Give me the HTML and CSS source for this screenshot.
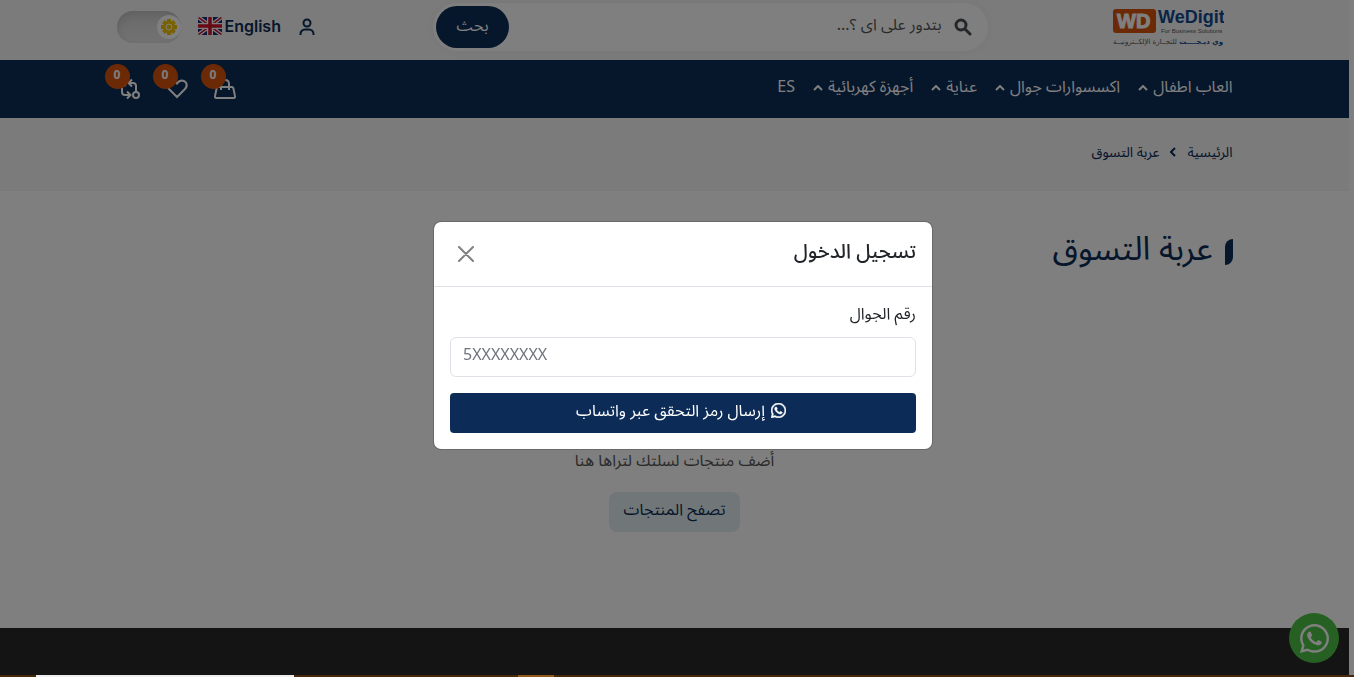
FILE: index.html
```html
<!DOCTYPE html>
<html lang="ar" dir="rtl">
<head>
  <meta charset="UTF-8">
  <meta name="viewport" content="width=device-width, initial-scale=1.0">
  <title>عربة التسوق</title>
  <link rel="stylesheet" href="styles.css">
</head>
<body>
  <div class="page">
    <header class="header">
      <div class="container header-row">
        <a href="#" class="logo" aria-label="WeDigit">
          <svg width="112" height="40" viewBox="0 0 112 40">
            <rect x="1" y="2" width="43" height="24" rx="3" fill="#d9530b"/>
            <text x="5" y="21" class="logo-mark" fill="#fff" stroke="#fff">WD</text>
            <text x="46" y="16" class="logo-name" fill="#12498f">WeDigit</text>
            <text x="49" y="26" class="logo-sub" fill="#555">For Business Solutions</text>
            <text x="111" y="37" class="logo-ar" direction="rtl"><tspan fill="#12498f" font-weight="bold">وي ديـجــــت</tspan><tspan fill="#555"> للتجــارة الإلكــترونيــة</tspan></text>
          </svg>
        </a>

        <form class="search">
          <svg class="search-icon" width="18" height="18" viewBox="0 0 18 18" fill="none" stroke="#495057" stroke-width="3">
            <circle cx="7" cy="7" r="5"/>
            <path d="M11 11l5 5" stroke-linecap="round"/>
          </svg>
          <input type="search" class="search-input" aria-label="بحث" placeholder="بتدور على اى ؟...">
          <button type="submit" class="search-btn">بحث</button>
        </form>

        <div class="actions">
          <a href="#" class="user" aria-label="حسابي">
            <svg width="16" height="18" viewBox="0 0 16 18" fill="none" stroke="#0c2c57" stroke-width="2">
              <circle cx="8" cy="5" r="3.5"/>
              <path d="M1.500 17v-1a4.500 4.500 0 0 1 4.500-4.500h4a4.500 4.500 0 0 1 4.500 4.500V17"/>
            </svg>
          </a>
          <a href="#" class="lang" dir="ltr">
            <svg width="24" height="18" viewBox="0 0 24 18">
              <clipPath id="flag"><rect width="24" height="18" rx="2"/></clipPath>
              <g clip-path="url(#flag)">
                <rect width="24" height="18" fill="#1b2a7b"/>
                <path d="M0 0l24 18M24 0L0 18" stroke="#fff" stroke-width="4"/>
                <path d="M0 0l24 18M24 0L0 18" stroke="#d0142c" stroke-width="1.500"/>
                <path d="M12 0v18M0 9h24" stroke="#fff" stroke-width="6"/>
                <path d="M12 0v18M0 9h24" stroke="#d0142c" stroke-width="3.500"/>
              </g>
            </svg>
            English
          </a>
          <label class="theme">
            <input type="checkbox" class="theme-input" aria-label="الوضع الليلي">
            <span class="theme-knob">
              <svg width="16" height="16" viewBox="0 0 16 16">
                <path d="M8 0v16M0 8h16M2.500 2.500l11 11M13.500 2.500l-11 11" stroke="#f2c200" stroke-width="4"/>
                <circle cx="8" cy="8" r="6" fill="#f2c200"/>
                <circle cx="8" cy="8" r="3" fill="#f2c200" stroke="#fff"/>
              </svg>
            </span>
          </label>
        </div>
      </div>
    </header>

    <nav class="navbar">
      <div class="container navbar-row">
        <ul class="menu">
          <li><a href="#">العاب اطفال <svg class="caret" viewBox="0 0 10 6"><path d="M1 5l4-4 4 4"/></svg></a></li>
          <li><a href="#">اكسسوارات جوال <svg class="caret" viewBox="0 0 10 6"><path d="M1 5l4-4 4 4"/></svg></a></li>
          <li><a href="#">عناية <svg class="caret" viewBox="0 0 10 6"><path d="M1 5l4-4 4 4"/></svg></a></li>
          <li><a href="#">أجهزة كهربائية <svg class="caret" viewBox="0 0 10 6"><path d="M1 5l4-4 4 4"/></svg></a></li>
          <li><a href="#">ES</a></li>
        </ul>
        <div class="shortcuts">
          <a href="#" class="shortcut" aria-label="السلة">
            <svg width="24" height="24" viewBox="0 0 24 24">
              <path d="M5 10h14q1 0 1.300 1l1.700 8q.5 2-1.500 2H3.500q-2 0-1.500-2l1.700-8q.3-1 1.300-1z"/>
              <path d="M8 13V7q0-4 4-4t4 4v6"/>
            </svg>
            <span class="badge">0</span>
          </a>
          <a href="#" class="shortcut" aria-label="المفضلة">
            <svg width="24" height="24" viewBox="0 0 24 24">
              <path d="M12 20L4 12C1 9 2 4 7 3.500c2.500 0 4 1.500 5 3 1-1.500 2.500-3 5-3 5 .5 6 5.500 3 8.500z"/>
            </svg>
            <span class="badge">0</span>
          </a>
          <a href="#" class="shortcut" aria-label="المقارنة">
            <svg width="24" height="24" viewBox="0 0 24 24">
              <circle cx="6" cy="6" r="3"/>
              <circle cx="19" cy="18" r="3"/>
              <path d="M5 9v6q0 3 3 3h5M10 14.500l3.500 3.500-3.500 3.500M19 15V9q0-3-3-3h-4M15 2.500L11.500 6 15 9.500"/>
            </svg>
            <span class="badge">0</span>
          </a>
        </div>
      </div>
    </nav>

    <div class="breadcrumb">
      <div class="container breadcrumb-row">
        <a href="#">الرئيسية</a>
        <svg width="6" height="10" viewBox="0 0 6 10" fill="none" stroke="#0c2c57" stroke-width="2"><path d="M5 1L1 5l4 4"/></svg>
        <span>عربة التسوق</span>
      </div>
    </div>

    <main class="container main">
      <h1 class="title"><span class="title-text">عربة التسوق</span></h1>
      <div class="empty">
        <p class="empty-text">أضف منتجات لسلتك لتراها هنا</p>
        <a href="#" class="empty-btn">تصفح المنتجات</a>
      </div>
    </main>

    <footer class="footer"></footer>
  </div>

  <a href="#" class="whatsapp" aria-label="واتساب">
    <svg width="29" height="29" viewBox="0 32 448 448" fill="#fff"><path d="M380.900 97.100C339 55.100 283.200 32 223.900 32c-122.400 0-222 99.600-222 222 0 39.100 10.200 77.300 29.600 111L0 480l117.700-30.900c32.400 17.700 68.900 27 106.100 27h.1c122.300 0 224.100-99.600 224.100-222 0-59.300-25.200-115-67.100-157zm-157 341.600c-33.200 0-65.700-8.900-94-25.700l-6.700-4-69.800 18.300L72 359.200l-4.400-7c-18.500-29.400-28.200-63.300-28.200-98.200 0-101.700 82.800-184.500 184.600-184.500 49.300 0 95.600 19.200 130.400 54.100 34.800 34.900 56.200 81.200 56.100 130.500 0 101.800-84.900 184.600-186.600 184.600zm101.200-138.200c-5.500-2.800-32.800-16.200-37.900-18-5.100-1.900-8.800-2.800-12.500 2.800-3.700 5.600-14.300 18-17.600 21.800-3.200 3.700-6.500 4.200-12 1.400-32.600-16.300-54-29.100-75.500-66-5.700-9.800 5.700-9.100 16.300-30.300 1.800-3.700.9-6.900-.5-9.700-1.400-2.800-12.500-30.100-17.100-41.200-4.500-10.800-9.100-9.300-12.500-9.500-3.200-.2-6.900-.2-10.600-.2-3.700 0-9.700 1.400-14.800 6.900-5.100 5.600-19.400 19-19.400 46.300 0 27.300 19.900 53.700 22.600 57.400 2.800 3.700 39.100 59.700 94.800 83.800 35.200 15.200 49 16.500 66.600 13.900 10.700-1.600 32.800-13.400 37.400-26.400 4.600-13 4.600-24.100 3.200-26.400-1.300-2.500-5-3.900-10.500-6.600z"/></svg>
  </a>

  <div class="backdrop">
    <div class="modal" role="dialog" aria-labelledby="login-title">
      <div class="modal-header">
        <h2 class="modal-title" id="login-title">تسجيل الدخول</h2>
        <button type="button" class="close" aria-label="إغلاق">
          <svg width="16" height="16" viewBox="0 0 16 16" fill="none" stroke="#808080" stroke-width="2" stroke-linecap="round"><path d="M1 1l14 14M15 1L1 15"/></svg>
        </button>
      </div>
      <form class="modal-body">
        <label for="phone" class="label">رقم الجوال</label>
        <input type="tel" id="phone" class="input" dir="ltr" placeholder="5XXXXXXXX">
        <button type="submit" class="submit">
          <svg width="15" height="15" viewBox="0 32 448 448" fill="#fff"><path d="M380.900 97.100C339 55.100 283.200 32 223.900 32c-122.400 0-222 99.600-222 222 0 39.100 10.200 77.300 29.600 111L0 480l117.700-30.900c32.400 17.700 68.900 27 106.100 27h.1c122.300 0 224.100-99.600 224.100-222 0-59.300-25.200-115-67.100-157zm-157 341.600c-33.200 0-65.700-8.900-94-25.700l-6.700-4-69.800 18.300L72 359.200l-4.400-7c-18.500-29.400-28.200-63.300-28.200-98.200 0-101.700 82.800-184.500 184.600-184.500 49.300 0 95.600 19.200 130.400 54.100 34.800 34.900 56.200 81.200 56.100 130.500 0 101.800-84.900 184.600-186.600 184.600zm101.200-138.200c-5.500-2.800-32.800-16.200-37.900-18-5.100-1.900-8.800-2.800-12.500 2.800-3.700 5.600-14.300 18-17.600 21.800-3.200 3.700-6.500 4.200-12 1.400-32.600-16.300-54-29.100-75.500-66-5.700-9.800 5.700-9.100 16.300-30.300 1.800-3.700.9-6.900-.5-9.700-1.400-2.800-12.500-30.100-17.100-41.200-4.500-10.800-9.100-9.300-12.500-9.500-3.200-.2-6.900-.2-10.600-.2-3.700 0-9.700 1.400-14.800 6.900-5.100 5.600-19.400 19-19.400 46.300 0 27.300 19.900 53.700 22.600 57.400 2.800 3.700 39.100 59.700 94.800 83.800 35.200 15.200 49 16.500 66.600 13.900 10.700-1.600 32.800-13.400 37.400-26.400 4.600-13 4.600-24.100 3.200-26.400-1.300-2.500-5-3.900-10.500-6.600z" stroke="#fff" stroke-width="16"/></svg>
          إرسال رمز التحقق عبر واتساب
        </button>
      </form>
    </div>
  </div>

  <div class="strip">
    <span class="strip-light"></span>
    <span class="strip-gold"></span>
  </div>
</body>
</html>
```

FILE: styles.css
```css
* {
  box-sizing: border-box;
}
body {
  margin: 0;
  font-family: "Noto Sans", "Noto Sans Arabic", "DejaVu Sans", sans-serif;
  font-size: 16px;
  line-height: 24px;
  color: #212529;
  background: #fff;
}
a {
  color: inherit;
  text-decoration: none;
}
button,
input {
  font: inherit;
}
button {
  border: 0;
  cursor: pointer;
}
svg {
  display: block;
  flex-shrink: 0;
}
.page {
  display: flex;
  flex-direction: column;
  min-height: 100vh;
  margin-right: 5px;
}
.container {
  width: 100%;
  max-width: 1140px;
  margin: 0 auto;
  padding: 0 12px;
}

/* header */
.header {
  background: #f7f7f7;
}
.header-row {
  display: flex;
  align-items: center;
  height: 60px;
  padding-bottom: 6px;
}
.logo {
  padding-right: 9px;
}
.logo svg {
  direction: ltr;
}
.logo-mark {
  font: bold 20px "Liberation Sans", sans-serif;
}
.logo-name {
  font: bold 18px "Liberation Sans", sans-serif;
}
.logo-sub {
  font: 6px "Liberation Sans", sans-serif;
}
.logo-ar {
  font-family: "DejaVu Sans", sans-serif;
  font-size: 7px;
}
.search {
  flex: 1;
  display: flex;
  align-items: center;
  height: 48px;
  margin: 0 124px 0 118px;
  padding: 3px 16px 3px 3px;
  border-radius: 24px;
  background: #fff;
  box-shadow: 0 0 12px rgba(0, 0, 0, 0.05);
}
.search-input {
  flex: 1;
  min-width: 0;
  padding: 0 12px 6px;
  border: 0;
  outline: 0;
  background: none;
}
.search-input::placeholder {
  color: #555;
  opacity: 1;
}
.search-btn {
  width: 73px;
  height: 42px;
  padding-bottom: 6px;
  border-radius: 21px;
  background: #0c2c57;
  color: #fff;
}
.actions {
  display: flex;
  align-items: center;
  color: #0c2c57;
}
.user {
  margin-left: 18px;
}
.lang {
  display: flex;
  align-items: center;
  gap: 3px;
  margin-left: 17px;
  padding-bottom: 2px;
  font-family: Inter, sans-serif;
  font-weight: 600;
}
.theme {
  display: flex;
  align-items: center;
  width: 64px;
  height: 32px;
  border-radius: 16px;
  background: #ddd;
  box-shadow: inset 0 4px 12px #bbb, inset 0 -4px 12px #eee;
}
.theme-input {
  position: absolute;
  opacity: 0;
}
.theme-knob {
  display: grid;
  place-items: center;
  width: 24px;
  height: 24px;
  border-radius: 50%;
  background: #fff;
}

/* navigation */
.navbar {
  background: #0c2c57;
  color: #fff;
}
.navbar-row {
  display: flex;
  align-items: center;
  justify-content: space-between;
  height: 58px;
}
.menu {
  display: flex;
  gap: 18px;
  margin: 0;
  padding: 0 0 6px;
  list-style: none;
}
.menu a {
  display: flex;
  align-items: center;
  gap: 5px;
}
.caret {
  width: 10px;
  height: 6px;
  margin-top: 4px;
  fill: none;
  stroke: currentColor;
  stroke-width: 2;
}
.shortcuts {
  display: flex;
  gap: 24px;
}
.shortcut {
  position: relative;
}
.shortcut svg {
  fill: none;
  stroke: currentColor;
  stroke-width: 2;
}
.badge {
  position: absolute;
  top: -13px;
  left: -12px;
  width: 25px;
  height: 25px;
  border-radius: 50%;
  background: #d9530b;
  font: bold 12px/22px "Noto Sans", sans-serif;
  text-align: center;
}

/* breadcrumb */
.breadcrumb {
  background: #f7f7f7;
  border-bottom: 1px solid #f3f3f3;
  color: #0c2c57;
  font-size: 14px;
}
.breadcrumb-row {
  display: flex;
  align-items: center;
  gap: 11px;
  height: 72px;
  padding-bottom: 4px;
}

/* cart */
.main {
  flex: 1;
}
.title {
  display: flex;
  align-items: center;
  gap: 12px;
  margin: 41px 0 0;
  color: #0c2c57;
  font-size: 33px;
  font-weight: 400;
  line-height: 48px;
}
.title::before {
  content: "";
  width: 8px;
  height: 26px;
  border-radius: 8px 0;
  background: #0c2c57;
}
.title-text {
  margin-top: -8px;
}
.empty {
  display: flex;
  flex-direction: column;
  align-items: center;
  padding-top: 176px;
}
.empty-text {
  margin: 0 0 20px;
  color: #555;
}
.empty-btn {
  padding: 5px 15px 11px;
  border-radius: 8px;
  background: #e3eef0;
  color: #0c2c57;
}
.footer {
  height: 49px;
  background: #282828;
}
.whatsapp {
  position: fixed;
  right: 15px;
  bottom: 14px;
  display: grid;
  place-items: center;
  width: 50px;
  height: 50px;
  border-radius: 50%;
  background: #4dc247;
}

/* login modal */
.backdrop {
  position: fixed;
  inset: 0;
  display: flex;
  align-items: center;
  justify-content: center;
  padding: 0 0 6px 12px;
  background: rgba(0, 0, 0, 0.5);
}
.modal {
  width: 100%;
  max-width: 500px;
  border: 1px solid rgba(0, 0, 0, 0.175);
  border-radius: 8px;
  background: #fff;
  background-clip: padding-box;
}
.modal-header {
  display: flex;
  align-items: center;
  justify-content: space-between;
  height: 65px;
  padding: 0 16px;
  border-bottom: 1px solid #dee2e6;
}
.modal-title {
  margin: 0;
  padding-bottom: 6px;
  font-size: 20px;
  font-weight: 500;
}
.close {
  display: grid;
  place-items: center;
  width: 32px;
  height: 32px;
  padding: 0;
  background: none;
}
.modal-body {
  display: flex;
  flex-direction: column;
  padding: 14px 16px 16px;
}
.label {
  margin-bottom: 12px;
}
.input {
  height: 40px;
  margin-bottom: 16px;
  padding: 0 12px 6px;
  border: 1px solid #dee2e6;
  border-radius: 6px;
}
.input::placeholder {
  color: #6c757d;
  opacity: 1;
}
.submit {
  display: flex;
  align-items: center;
  justify-content: center;
  gap: 6px;
  height: 40px;
  padding: 0 10px 6px 6px;
  border-radius: 4px;
  background: #0c2c57;
  color: #fff;
}

/* bottom edge */
.strip {
  position: fixed;
  inset: auto 0 0;
  display: flex;
  gap: 224px;
  height: 2px;
  padding-left: 36px;
  direction: ltr;
  background: #46290d;
}
.strip-light {
  width: 258px;
  background: #eee;
}
.strip-gold {
  width: 36px;
  background: #92591a;
}
```
